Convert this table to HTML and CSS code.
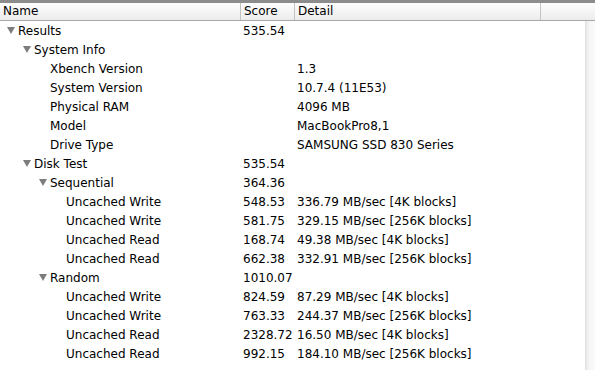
FILE: index.html
```html
<!DOCTYPE html>
<html lang="en">
<head>
  <meta charset="UTF-8">
  <title>Xbench Results</title>
  <link rel="stylesheet" href="styles.css">
</head>
<body>

  <!-- Column headers -->
  <div class="header">
    <div class="col-head name-head">Name</div>
    <div class="col-head score-head">Score</div>
    <div class="col-head detail-head">Detail</div>
    <div class="col-head filler-head"></div>
  </div>

  <div class="body">
    <!-- Outline rows -->
    <div class="outline">
      <div class="row"><div class="name lvl0"><span class="tri"></span>Results</div><div class="score">535.54</div><div class="detail"></div></div>
      <div class="row"><div class="name lvl1"><span class="tri"></span>System Info</div><div class="score"></div><div class="detail"></div></div>
      <div class="row"><div class="name lvl2">Xbench Version</div><div class="score"></div><div class="detail">1.3</div></div>
      <div class="row"><div class="name lvl2">System Version</div><div class="score"></div><div class="detail">10.7.4 (11E53)</div></div>
      <div class="row"><div class="name lvl2">Physical RAM</div><div class="score"></div><div class="detail">4096 MB</div></div>
      <div class="row"><div class="name lvl2">Model</div><div class="score"></div><div class="detail">MacBookPro8,1</div></div>
      <div class="row"><div class="name lvl2">Drive Type</div><div class="score"></div><div class="detail">SAMSUNG SSD 830 Series</div></div>
      <div class="row"><div class="name lvl1"><span class="tri"></span>Disk Test</div><div class="score">535.54</div><div class="detail"></div></div>
      <div class="row"><div class="name lvl2"><span class="tri"></span>Sequential</div><div class="score">364.36</div><div class="detail"></div></div>
      <div class="row"><div class="name lvl3">Uncached Write</div><div class="score">548.53</div><div class="detail">336.79 MB/sec [4K blocks]</div></div>
      <div class="row"><div class="name lvl3">Uncached Write</div><div class="score">581.75</div><div class="detail">329.15 MB/sec [256K blocks]</div></div>
      <div class="row"><div class="name lvl3">Uncached Read</div><div class="score">168.74</div><div class="detail">49.38 MB/sec [4K blocks]</div></div>
      <div class="row"><div class="name lvl3">Uncached Read</div><div class="score">662.38</div><div class="detail">332.91 MB/sec [256K blocks]</div></div>
      <div class="row"><div class="name lvl2"><span class="tri"></span>Random</div><div class="score">1010.07</div><div class="detail"></div></div>
      <div class="row"><div class="name lvl3">Uncached Write</div><div class="score">824.59</div><div class="detail">87.29 MB/sec [4K blocks]</div></div>
      <div class="row"><div class="name lvl3">Uncached Write</div><div class="score">763.33</div><div class="detail">244.37 MB/sec [256K blocks]</div></div>
      <div class="row"><div class="name lvl3">Uncached Read</div><div class="score">2328.72</div><div class="detail">16.50 MB/sec [4K blocks]</div></div>
      <div class="row"><div class="name lvl3">Uncached Read</div><div class="score">992.15</div><div class="detail">184.10 MB/sec [256K blocks]</div></div>
    </div>

    <!-- Vertical scroller track -->
    <div class="scroller"></div>
  </div>

</body>
</html>
```

FILE: styles.css
```css
html, body {
  margin: 0;
  height: 100%;
}
body {
  font-family: "DejaVu Sans", "Lucida Grande", sans-serif;
  font-size: 12px;
  color: #000;
  background: #fff;
  overflow: hidden;
}

/* header bar */
.header {
  display: grid;
  grid-template-columns: 240px 54px 246px 1fr;
  height: 17px;
  border-top: 3px solid #8c8c8c;
  border-bottom: 1px solid #a8a8a8;
  background: linear-gradient(#fdfdfd, #ececec);
  font-size: 12px;
}
.col-head {
  line-height: 17px;
  padding-left: 3px;
  border-left: 1px solid #c3c3c3;
}
.name-head {
  border-left: none;
}

.body {
  display: flex;
  height: calc(100% - 21px);
}
.outline {
  flex: 1;
  padding-top: 1px;
}
.scroller {
  width: 9px;
  background: linear-gradient(to right, #e9e9e9, #f6f6f6 40%, #fafafa);
  border-left: 1px solid #e2e2e2;
}

/* one line of the outline */
.row {
  display: grid;
  grid-template-columns: 240px 54px 1fr;
  height: 19px;
  line-height: 19px;
  white-space: nowrap;
}
.name {
  display: flex;
  align-items: center;
}
.score,
.detail {
  padding-left: 3px;
}

.lvl0 { padding-left: 18px; }
.lvl1 { padding-left: 34px; }
.lvl2 { padding-left: 50px; }
.lvl3 { padding-left: 66px; }

/* disclosure triangle, pointing down */
.tri {
  width: 0;
  height: 0;
  border-left: 4px solid transparent;
  border-right: 4px solid transparent;
  border-top: 7px solid #7d7d7d;
  margin-left: -11px;
  margin-right: 3px;
  margin-top: -2px;
}
```
